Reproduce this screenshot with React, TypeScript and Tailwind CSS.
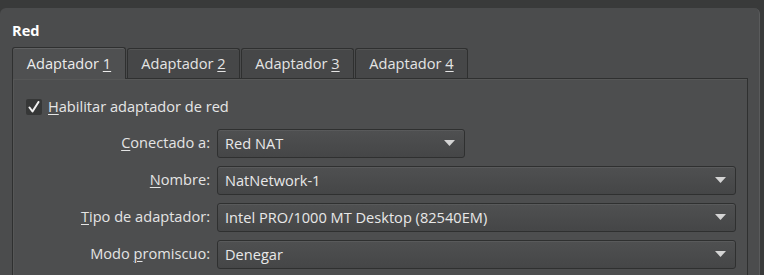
import { ReactNode } from "react";

const font = { fontFamily: '"Open Sans", "Noto Sans", sans-serif' };

function Mnemonic({ text, at }: { text: string; at: number }) {
  return (
    <span>
      {text.slice(0, at)}
      <span className="underline underline-offset-2 decoration-1">{text[at]}</span>
      {text.slice(at + 1)}
    </span>
  );
}

function Combo({ value, wide = true }: { value: string; wide?: boolean }) {
  return (
    <div
      className={`h-[29px] ${wide ? "w-[519px]" : "w-[248px]"} flex items-center justify-between pl-[7px] pr-[9px] rounded-[3px] border border-[#2f3030] bg-gradient-to-b from-[#4f5051] to-[#454647] shadow-[inset_0_1px_0_rgba(255,255,255,0.06)]`}
    >
      <span className="text-[14.6px] text-[#e8e8e8] leading-none">{value}</span>
      <svg width="11" height="6" viewBox="0 0 11 6">
        <path d="M0 0 H11 L5.5 6 Z" fill="#d4d4d4" />
      </svg>
    </div>
  );
}

function Row({ label, children }: { label: ReactNode; children: ReactNode }) {
  return (
    <div className="flex items-center gap-[7px]">
      <div className="w-[197px] text-right text-[14.6px] text-[#e4e4e4]">{label}</div>
      {children}
    </div>
  );
}

function Tab({ children, active }: { children: ReactNode; active?: boolean }) {
  return active ? (
    <div className="w-[114px] h-[32px] -mb-px z-10 flex items-center justify-center rounded-t-[3px] border border-b-0 border-[#2f3030] bg-[#4f5051] shadow-[inset_0_1px_0_rgba(255,255,255,0.1)] text-[14.6px] text-[#ececec]">
      {children}
    </div>
  ) : (
    <div className="w-[113px] h-[30px] flex items-center justify-center rounded-t-[3px] border border-b-0 border-[#2f3030] bg-[#464748] shadow-[inset_0_1px_0_rgba(255,255,255,0.07)] text-[14.6px] text-[#e4e4e4]">
      {children}
    </div>
  );
}

export default function App() {
  return (
    <div className="w-[764px] h-[275px] overflow-hidden bg-[#393a3a] pt-[8px] pr-[4px]" style={font}>
      <div className="h-[267px] rounded-t-[6px] bg-[#4b4c4d] border-r border-[#5a5b5c] px-[12px] pt-[12px]">
        <div className="text-[14.6px] font-bold text-white leading-[20px]">Red</div>
        <div className="mt-[7px] flex items-end gap-[1px]">
          <Tab active>
            <Mnemonic text="Adaptador 1" at={10} />
          </Tab>
          <Tab>
            <Mnemonic text="Adaptador 2" at={10} />
          </Tab>
          <Tab>
            <Mnemonic text="Adaptador 3" at={10} />
          </Tab>
          <Tab>
            <Mnemonic text="Adaptador 4" at={10} />
          </Tab>
        </div>
        <div className="w-[736px] h-[200px] border border-[#2f3030] bg-[#4d4e4f] shadow-[inset_1px_1px_0_rgba(255,255,255,0.05)] pt-[17px]">
          <div className="flex items-center gap-[6px] pl-[13px]">
            <div className="w-[16px] h-[16px] rounded-[2px] bg-[#363737] flex items-center justify-center">
              <svg width="12" height="12" viewBox="0 0 12 12">
                <path d="M1.5 6.5 L4.5 10.5 L10.5 1" fill="none" stroke="#f2f2f2" strokeWidth="2" strokeLinecap="round" strokeLinejoin="round" />
              </svg>
            </div>
            <span className="text-[14.6px] text-[#e6e6e6]">
              <Mnemonic text="Habilitar adaptador de red" at={0} />
            </span>
          </div>
          <div className="mt-[11px] flex flex-col gap-[8px]">
            <Row label={<Mnemonic text="Conectado a:" at={0} />}>
              <Combo value="Red NAT" wide={false} />
            </Row>
            <Row label={<Mnemonic text="Nombre:" at={0} />}>
              <Combo value="NatNetwork-1" />
            </Row>
            <Row label={<Mnemonic text="Tipo de adaptador:" at={0} />}>
              <Combo value="Intel PRO/1000 MT Desktop (82540EM)" />
            </Row>
            <Row label={<Mnemonic text="Modo promiscuo:" at={5} />}>
              <Combo value="Denegar" />
            </Row>
          </div>
        </div>
      </div>
    </div>
  );
}
